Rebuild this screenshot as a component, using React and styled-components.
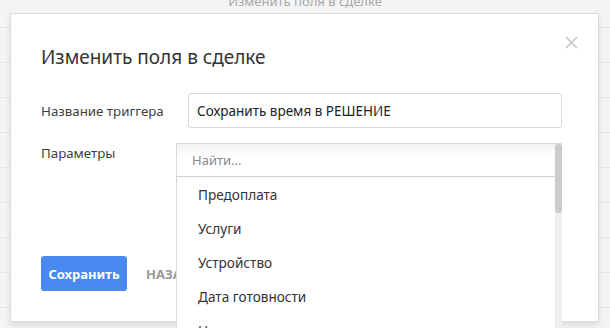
import React from "react";
import styled, { createGlobalStyle } from "styled-components";

const GlobalStyle = createGlobalStyle`
  html, body {
    margin: 0;
    padding: 0;
    background: #f3f3f3;
    font-family: "Noto Sans", "Open Sans", sans-serif;
  }
`;

const options = ["Предоплата", "Услуги", "Устройство", "Дата готовности", "Номер заказа"];

export default function App() {
  return (
    <Page>
      <GlobalStyle />
      <Backdrop>
        <BackTitle>Изменить поля в сделке</BackTitle>
        {Array.from({ length: 9 }).map((_, i) => (
          <BackRow key={i} />
        ))}
      </Backdrop>

      <Modal>
        <Close aria-label="close">
          <svg width="13" height="13" viewBox="0 0 13 13">
            <path d="M1 1L12 12M12 1L1 12" stroke="#c6c6c6" strokeWidth="1.6" />
          </svg>
        </Close>
        <Title>Изменить поля в сделке</Title>

        <Form>
          <Label>Название триггера</Label>
          <Input defaultValue="Сохранить время в РЕШЕНИЕ" />

          <Label $top>Параметры</Label>
          <SelectHolder>
            <Dropdown>
              <SearchBox>
                <Search placeholder="Найти..." />
              </SearchBox>
              <List>
                {options.map((o) => (
                  <Option key={o}>{o}</Option>
                ))}
              </List>
              <Scrollbar>
                <Thumb />
              </Scrollbar>
            </Dropdown>
          </SelectHolder>
        </Form>

        <Actions>
          <Primary>Сохранить</Primary>
          <Ghost>НАЗАД</Ghost>
        </Actions>
      </Modal>
    </Page>
  );
}

const Page = styled.div`
  position: relative;
  width: 610px;
  height: 328px;
  overflow: hidden;
`;

const Backdrop = styled.div`
  display: flex;
  flex-direction: column;
  height: 100%;
  background: #f4f4f4;
`;

const BackTitle = styled.div`
  height: 18px;
  margin-top: -8px;
  text-align: center;
  font-size: 13px;
  color: #a8a8a8;
  border-bottom: 1px solid #e6e6e6;
  padding-bottom: 17px;
`;

const BackRow = styled.div`
  height: 34px;
  flex-shrink: 0;
  border-bottom: 1px solid #e6e6e6;
`;

const Modal = styled.div`
  position: absolute;
  left: 10px;
  top: 13px;
  width: 589px;
  height: 309px;
  background: #fff;
  border: 1px solid #dcdcdc;
  box-shadow: 0 3px 6px rgba(0, 0, 0, 0.1);
  padding: 30px 30px 0 30px;
  box-sizing: border-box;
`;

const Close = styled.div`
  position: absolute;
  top: 22px;
  right: 20px;
  width: 13px;
  height: 13px;
  display: flex;
`;

const Title = styled.h2`
  margin: 0;
  font-size: 19px;
  line-height: 26px;
  font-weight: 400;
  color: #333;
`;

const Form = styled.div`
  display: grid;
  grid-template-columns: 147px 374px;
  row-gap: 15px;
  margin-top: 23px;
  align-items: center;
`;

const Label = styled.div`
  font-size: 13.3px;
  color: #3d3d3d;
  align-self: ${(p) => (p.$top ? "start" : "center")};
  padding-top: ${(p) => (p.$top ? "1px" : "0")};
  line-height: 18px;
`;

const Input = styled.input`
  height: 35px;
  box-sizing: border-box;
  border: 1px solid #dadada;
  border-radius: 3px;
  padding: 0 8px;
  font-family: inherit;
  font-size: 13.5px;
  color: #222;
  outline: none;
`;

const SelectHolder = styled.div`
  position: relative;
  height: 102px;
`;

const Dropdown = styled.div`
  position: absolute;
  left: -12px;
  top: 0;
  width: 386px;
  background: #fff;
  border: 1px solid #d8d8d8;
  border-right: none;
  box-sizing: border-box;
  z-index: 2;
`;

const SearchBox = styled.div`
  height: 32px;
  border-bottom: 1px solid #d0d0d0;
  margin-right: 7px;
  background: linear-gradient(#f2f2f2, #fff 40%);
  display: flex;
  align-items: center;
`;

const Search = styled.input`
  border: none;
  background: transparent;
  outline: none;
  padding: 0 15px;
  font-family: inherit;
  font-size: 13px;
  color: #555;
  width: 100%;
  &::placeholder {
    color: #888;
  }
`;

const List = styled.div`
  display: flex;
  flex-direction: column;
  padding-top: 1px;
  margin-right: 7px;
`;

const Option = styled.div`
  height: 34px;
  line-height: 34px;
  padding-left: 21px;
  font-size: 13.6px;
  color: #333;
`;

const Scrollbar = styled.div`
  position: absolute;
  top: 0;
  right: 0;
  bottom: 0;
  width: 7px;
  background: #efefef;
`;

const Thumb = styled.div`
  height: 69px;
  background: #cbcbcb;
  border-radius: 3px;
`;

const Actions = styled.div`
  display: flex;
  align-items: center;
  gap: 19px;
  margin-top: 11px;
`;

const Primary = styled.button`
  width: 86px;
  height: 35px;
  border: none;
  border-radius: 3px;
  background: #4a89ef;
  color: #fff;
  font-family: inherit;
  font-size: 13px;
  font-weight: 700;
`;

const Ghost = styled.button`
  border: none;
  background: none;
  padding: 0;
  font-family: inherit;
  font-size: 13px;
  font-weight: 700;
  color: #999;
`;
